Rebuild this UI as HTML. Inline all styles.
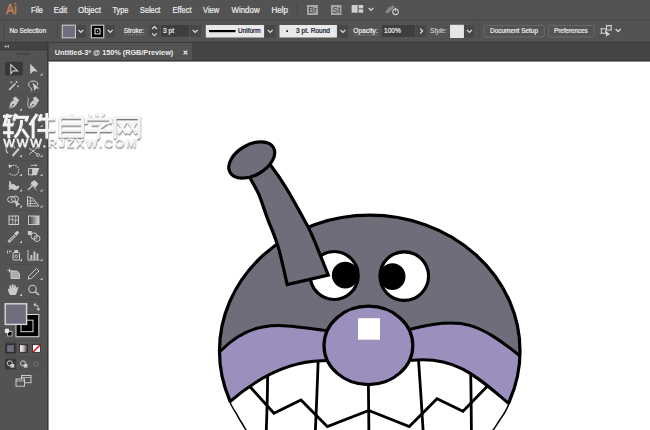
<!DOCTYPE html>
<html><head><meta charset="utf-8">
<style>
*{box-sizing:border-box}
html,body{margin:0;padding:0;width:650px;height:430px;overflow:hidden;background:#fff;font-family:"Liberation Sans",sans-serif}
.a{position:absolute}
svg text{font-family:"Liberation Sans",sans-serif;white-space:pre}
</style></head><body>
<div class="a" style="left:0;top:0;width:650px;height:19px;background:#535353"></div>
<div class="a" style="left:0;top:19px;width:650px;height:1px;background:#494949"></div>
<div class="a" style="left:0;top:20px;width:650px;height:1px;background:#4e4e4e"></div>
<div class="a" style="left:0;top:21px;width:650px;height:21px;background:#535353"></div>
<div class="a" style="left:0;top:41px;width:650px;height:1px;background:#4f4f4f"></div>
<div class="a" style="left:0;top:42px;width:650px;height:1px;background:#3c3c3c"></div>
<div class="a" style="left:47px;top:43px;width:603px;height:17px;background:#444"></div>
<div class="a" style="left:49px;top:43px;width:143px;height:17px;background:#535353"></div>
<div class="a" style="left:47px;top:60px;width:603px;height:1px;background:#393939"></div>
<div class="a" style="left:48px;top:61px;width:602px;height:1px;background:#8c8c8c"></div>
<div class="a" style="left:0;top:43px;width:47px;height:387px;background:#535353"></div>
<div class="a" style="left:0;top:43px;width:47px;height:6px;background:#434343"></div>
<div class="a" style="left:0;top:49px;width:47px;height:1px;background:#3e3e3e"></div>
<div class="a" style="left:0;top:50px;width:47px;height:1px;background:#4a4a4a"></div>
<div class="a" style="left:47px;top:43px;width:1px;height:387px;background:#393939"></div>
<div class="a" style="left:48px;top:61px;width:1px;height:369px;background:#8c8c8c"></div>
<div class="a" style="left:49px;top:62px;width:601px;height:368px;background:#fff"></div>

<svg class="a" style="left:0;top:0" width="650" height="430" viewBox="0 0 650 430">

  <defs>
    <clipPath id="face"><ellipse cx="369.75" cy="351" rx="150.3" ry="135.8"/><path d="M229.0,400.5 C229.6,401.7 231.3,405.2 232.6,407.5 C233.9,409.8 235.3,411.8 236.7,414.2 C238.1,416.6 239.6,419.4 241.2,422.0 C242.8,424.6 244.8,428.0 246.0,430.0 C247.2,432.0 247.9,433.3 248.3,434.0 L490.5,434 L510.5,400 Z"/></clipPath>
    <clipPath id="abovelo"><path d="M212,417 L229.5,402 C254.9,380.0 287.5,361.4 322,360.8 L368,359.5 L412.4,360.2 C455.8,356.1 476.7,376.6 507,402 L522,415 L530,100 L205,100 Z"/></clipPath>
  </defs>
  <ellipse cx="369.75" cy="351" rx="150.3" ry="135.8" fill="#6e6e7a"/>
  <g clip-path="url(#face)">
    <path d="M207,364.5 L220.5,351 C253.9,317.4 281.6,325.0 323.9,330.2 L368,331 L412.4,328.8 C462.5,315.8 479.3,324.0 518.5,354.7 L532,365.3 L530,440 L205,440 Z" fill="#9a8fbd"/>
    <path d="M212,417 L229.5,402 C254.9,380.0 287.5,361.4 322,360.8 L368,359.5 L412.4,360.2 C455.8,356.1 476.7,376.6 507,402 L522,415 L530,440 L205,440 Z" fill="#fff"/>
    <g fill="none" stroke="#000" stroke-width="3">
      <path d="M207,364.5 L220.5,351 C253.9,317.4 281.6,325.0 323.9,330.2 L368,331 L412.4,328.8 C462.5,315.8 479.3,324.0 518.5,354.7 L532,365.3"/>
      <path d="M212,417 L229.5,402 C254.9,380.0 287.5,361.4 322,360.8 L368,359.5 L412.4,360.2 C455.8,356.1 476.7,376.6 507,402 L522,415"/>
      <path d="M250.1,386.8 L273.9,413.3 L301,400 L327.3,426.5 L368.8,410.4 L409.3,426.5 L437,398.8 L463,411.2 L487.5,386" stroke-width="2.8"/>
      <path d="M267.6,376 Q267.5,400 266.2,432" stroke-width="2.8"/><path d="M318.1,362 Q317,395 315.3,432" stroke-width="2.8"/><path d="M368.4,384 L368.9,432" stroke-width="2.8"/><path d="M418.5,360 Q421,395 423.2,432" stroke-width="2.8"/><path d="M470.7,374 Q471.2,400 471.4,432" stroke-width="2.8"/>
    </g>
  </g>
  <path d="M229.0,400.5 C229.6,401.7 231.3,405.2 232.6,407.5 C233.9,409.8 235.3,411.8 236.7,414.2 C238.1,416.6 239.6,419.4 241.2,422.0 C242.8,424.6 244.8,428.0 246.0,430.0 C247.2,432.0 247.9,433.3 248.3,434.0 M510.5,400.0 C510.1,401.0 508.9,404.0 508.0,406.0 C507.1,408.0 506.5,409.5 505.1,411.9 C503.7,414.3 501.5,417.5 499.5,420.5 C497.5,423.5 494.7,427.8 493.2,430.0 C491.7,432.2 490.9,433.3 490.5,434.0" fill="none" stroke="#000" stroke-width="1.5"/>
  <ellipse cx="369.75" cy="351" rx="150.3" ry="135.8" fill="none" stroke="#000" stroke-width="3.2" clip-path="url(#abovelo)"/>
  <g stroke="#000" stroke-width="3.2">
    <circle cx="334.2" cy="275.5" r="24" fill="#fff"/>
    <ellipse cx="345.2" cy="275.1" rx="13.4" ry="13.3" fill="#000" stroke="none"/>
    <circle cx="404.25" cy="276.1" r="24.3" fill="#fff"/>
    <ellipse cx="392.4" cy="276.6" rx="13.1" ry="13.4" fill="#000" stroke="none"/>
    <ellipse cx="368.4" cy="345.4" rx="44.4" ry="39.2" fill="#9a8fbd"/>
    <rect x="358" y="318.2" width="22" height="21.5" fill="#fff" stroke="none"/>
    <path d="M246.0,170.0 C246.8,171.5 248.3,174.7 250.5,178.8 C252.7,183.0 256.2,188.3 259.0,194.9 C261.8,201.5 264.3,210.0 267.5,218.6 C270.7,227.2 274.7,235.4 278.0,246.4 C281.3,257.4 285.7,278.2 287.2,284.6 L328.2,275 C325.6,268.5 316.4,245.3 312.3,235.9 C308.2,226.5 307.9,226.6 303.5,218.6 C299.1,210.6 291.5,196.6 286.1,187.9 C280.8,179.2 275.4,171.6 271.4,166.3 C267.4,161.0 263.6,157.7 262.0,156.0 Z" fill="#6e6e7a"/>
    <ellipse cx="251.75" cy="160" rx="25" ry="15.3" transform="rotate(-30 251.75 160)" fill="#6e6e7a"/>
  </g>

<g><path d="M4,46.4 L6.3,45 L6.3,47.8 Z M6.6,46.4 L8.9,45 L8.9,47.8 Z" fill="#cbcbcb"/>
<rect x="17" y="52.7" width="13" height="2" fill="#464646"/>
<rect x="5" y="61.8" width="17.8" height="13.6" rx="1.5" fill="#383838"/>
<path d="M10.8,64.6 L10.8,73.6 L13.4,70.9 L17.6,70.9 Z" fill="none" stroke="#cbcbcb" stroke-width="1.1" stroke-linejoin="miter"/>
<path d="M30.2,63.8 L30.2,74.2 L33.2,71.3 L37.8,71.4 Z" fill="#cbcbcb"/>
<path d="M42.5,73.0 L42.5,75.5 L40.0,75.5 Z" fill="#cbcbcb"/>
<path d="M9,90 L15.5,83.5" stroke="#cbcbcb" stroke-width="1.6"/>
<path d="M16.5,81 l0,2 M15.5,82 l2,0 M11.5,81.5 l0,1.6 M10.7,82.3 l1.6,0 M18,85.5 l0,1.6 M17.2,86.3 l1.6,0" stroke="#cbcbcb" stroke-width="0.9"/>
<path d="M31.5,88.5 C27,86 28,81 33,81 C38,81 39,84.5 36.5,86" fill="none" stroke="#cbcbcb" stroke-width="1"/>
<path d="M32.5,82.5 L39.5,88.5 L36,88.6 L34.5,91 Z" fill="#cbcbcb"/>
<path d="M31.5,88.5 q1,2 -0.5,3" fill="none" stroke="#cbcbcb" stroke-width="0.9"/>
<rect x="4.5" y="94" width="38.5" height="1" fill="#4d4d4d"/>
<g transform="translate(8.5,98)"><path d="M0.5,11 L2,4.8 L5.5,1.8 L9,5.3 L6,8.8 Z" fill="#cbcbcb"/><path d="M4.2,0.5 L7,-1.6 L10.8,2.2 L8.6,5" fill="#cbcbcb"/><path d="M0.8,10.7 L4.2,7.2" stroke="#535353" stroke-width="0.8"/><circle cx="4.6" cy="6.6" r="0.9" fill="#535353"/></g>
<path d="M22,108.2 L22,110.7 L19.5,110.7 Z" fill="#cbcbcb"/>
<g transform="translate(28.5,98)"><path d="M0.5,11 L2,4.8 L5.5,1.8 L9,5.3 L6,8.8 Z" fill="#cbcbcb"/><path d="M4.2,0.5 L7,-1.6 L10.8,2.2 L8.6,5" fill="#cbcbcb"/><path d="M0.8,10.7 L4.2,7.2" stroke="#535353" stroke-width="0.8"/><circle cx="4.6" cy="6.6" r="0.9" fill="#535353"/></g>
<path d="M29,108 C26,104 30,99 27.5,97.5" fill="none" stroke="#cbcbcb" stroke-width="0.9"/>
<path d="M9,115.5 h9 M13.5,115.5 v10" stroke="#cbcbcb" stroke-width="1.5"/>
<path d="M22,124.5 L22,127 L19.5,127 Z" fill="#cbcbcb"/>
<path d="M29,125 L39,115" stroke="#cbcbcb" stroke-width="1.2"/>
<path d="M42.5,124.5 L42.5,127 L40.0,127 Z" fill="#cbcbcb"/>
<path d="M8,153 A4.5,4.5 0 1 1 15,148.5" fill="none" stroke="#cbcbcb" stroke-width="1.1"/>
<path d="M12.5,156 L19,148.5" stroke="#cbcbcb" stroke-width="2.2"/>
<path d="M22,154.5 L22,157 L19.5,157 Z" fill="#cbcbcb"/>
<path d="M29,148 L37,154 M29,154.5 L37,147.5" stroke="#cbcbcb" stroke-width="1"/><circle cx="38" cy="155" r="1.4" fill="none" stroke="#cbcbcb" stroke-width="0.9"/><circle cx="38" cy="147" r="1.4" fill="none" stroke="#cbcbcb" stroke-width="0.9"/>
<path d="M42.5,154.5 L42.5,157 L40.0,157 Z" fill="#cbcbcb"/>
<rect x="4.5" y="160" width="38.5" height="1" fill="#4d4d4d"/>
<path d="M10.5,166.5 A5,5 0 1 1 9.2,172.5" fill="none" stroke="#cbcbcb" stroke-width="1.1" stroke-dasharray="1.6 0.8"/><path d="M8.3,164.5 L12.2,165.2 L9.4,168.5 Z" fill="#cbcbcb"/>
<path d="M22,173.5 L22,176 L19.5,176 Z" fill="#cbcbcb"/>
<rect x="28.6" y="168.6" width="4.2" height="6.2" fill="none" stroke="#cbcbcb" stroke-width="1"/><path d="M32.3,168.1 L39.3,168.1 L36.6,175.3 L32.3,175.3 Z" fill="#cbcbcb"/><path d="M30.8,165.3 H36.3" stroke="#cbcbcb" stroke-width="0.9"/><path d="M35.3,163.9 L37.3,165.3 L35.3,166.7 Z" fill="#cbcbcb"/>
<path d="M42.5,173.5 L42.5,176 L40.0,176 Z" fill="#cbcbcb"/>
<path d="M9,181 c2,0 3,2 2,3.5 c2,-1 5,0 5,2 c1,-1 3,-1 3.5,0.5 c-1,1 -1.5,2.5 -3.5,3 c-2,0.5 -4,-0.5 -5,-1.5 c-0.5,1 -1.5,1.5 -2.5,1.5 c1,-1.5 1,-3 0,-4 c1,-1 1,-3 0.5,-5 Z" fill="#cbcbcb"/>
<path d="M22,189.0 L22,191.5 L19.5,191.5 Z" fill="#cbcbcb"/>
<path d="M28,190 L32.5,185.5" stroke="#cbcbcb" stroke-width="1.2"/><path d="M31,183 L34.5,180.5 L37.8,183.8 L35.3,187.3 Z M30.5,184 L36.5,190" fill="#cbcbcb" stroke="#cbcbcb" stroke-width="1"/>
<path d="M42.5,189.0 L42.5,191.5 L40.0,191.5 Z" fill="#cbcbcb"/>
<ellipse cx="11.5" cy="199.5" rx="4" ry="3" fill="none" stroke="#cbcbcb" stroke-width="1"/><ellipse cx="15" cy="199" rx="3.5" ry="3" fill="none" stroke="#cbcbcb" stroke-width="1"/><path d="M14.5,200 L20.5,204.5 L17.8,205 L16.5,207.2 Z" fill="#cbcbcb"/>
<path d="M22,205.0 L22,207.5 L19.5,207.5 Z" fill="#cbcbcb"/>
<path d="M27.5,196.5 L33,198.5 L39,206 L27.5,206 Z" fill="none" stroke="#cbcbcb" stroke-width="1"/><path d="M30.5,197.5 V206 M27.5,201 H34.5 M27.5,203.5 H37" stroke="#cbcbcb" stroke-width="0.8"/>
<path d="M42.5,205.0 L42.5,207.5 L40.0,207.5 Z" fill="#cbcbcb"/>
<rect x="4.5" y="210" width="38.5" height="1" fill="#4d4d4d"/>
<rect x="9" y="216" width="9.5" height="8.5" fill="none" stroke="#cbcbcb" stroke-width="1"/><path d="M9,220 C12,218 15,222 18.5,219.5 M12.5,216 C11.5,219 14,221 12.5,224.5 M15.5,216 C16.5,219 14.5,222 16,224.5" fill="none" stroke="#cbcbcb" stroke-width="0.8"/>
<defs><linearGradient id="gr" x1="0" x2="1" y1="0" y2="0"><stop offset="0" stop-color="#3a3a3a"/><stop offset="1" stop-color="#d8d8d8"/></linearGradient><linearGradient id="gr2" x1="0" x2="1"><stop offset="0" stop-color="#fafafa"/><stop offset="0.45" stop-color="#d0c8c8"/><stop offset="1" stop-color="#3a3030"/></linearGradient></defs>
<rect x="28.5" y="216" width="10.5" height="8.5" fill="url(#gr)" stroke="#cbcbcb" stroke-width="1"/>
<path d="M9,241.5 L15,235.5 M8.5,242 l1,-1" stroke="#cbcbcb" stroke-width="2.6"/><path d="M9.8,240.7 L14.6,235.9" stroke="#535353" stroke-width="1"/><path d="M14,233.5 L17.5,230.8 L19.2,232.5 L16.5,236 Z" fill="#cbcbcb"/>
<path d="M22,240.5 L22,243 L19.5,243 Z" fill="#cbcbcb"/>
<rect x="27.8" y="231" width="4" height="4" fill="#cbcbcb"/><circle cx="34" cy="236" r="3.2" fill="none" stroke="#cbcbcb" stroke-width="1"/><circle cx="37" cy="238.5" r="3" fill="none" stroke="#cbcbcb" stroke-width="1"/>
<rect x="4.5" y="246" width="38.5" height="1" fill="#4d4d4d"/>
<rect x="13" y="252.5" width="6.5" height="7.5" rx="1" fill="none" stroke="#cbcbcb" stroke-width="1"/><rect x="14.5" y="250" width="3.5" height="2" fill="#cbcbcb"/><circle cx="16.2" cy="256.3" r="1.4" fill="none" stroke="#cbcbcb" stroke-width="0.9"/><path d="M7.5,250.5 v3 M9.5,250.5 v2 M11,250.5 v1.5" stroke="#cbcbcb" stroke-width="0.9"/>
<path d="M22,258.5 L22,261 L19.5,261 Z" fill="#cbcbcb"/>
<path d="M28,250 V260 H39.5" fill="none" stroke="#cbcbcb" stroke-width="1"/><rect x="30.5" y="255" width="1.8" height="4.5" fill="#cbcbcb"/><rect x="33.5" y="251.5" width="1.8" height="8" fill="#cbcbcb"/><rect x="36.5" y="253.5" width="1.8" height="6" fill="#cbcbcb"/>
<path d="M42.5,258.5 L42.5,261 L40.0,261 Z" fill="#cbcbcb"/>
<rect x="4.5" y="264" width="38.5" height="1" fill="#4d4d4d"/>
<path d="M7.5,270.5 h4 M9.5,268.5 v4" stroke="#cbcbcb" stroke-width="0.9"/><path d="M11,271 h6 l2.5,2.5 v5 h-8.5 Z" fill="#cbcbcb" fill-opacity="0.75" stroke="#cbcbcb" stroke-width="1"/>
<path d="M28,279 L28.8,276 L36.5,268.5 L39,271 L31.3,278.5 Z" fill="none" stroke="#cbcbcb" stroke-width="1"/>
<path d="M42.5,277.5 L42.5,280 L40.0,280 Z" fill="#cbcbcb"/>
<path d="M10,295 C8.5,292 7.5,290 8,288.5 L9.5,289.5 L9.5,285.5 L11,285 L11.5,288.5 L12,284.3 L13.5,284.3 L13.8,288.5 L14.5,285 L16,285.5 L15.8,289 L17,286.8 L18.5,287.3 L17,292 C16.5,293.5 16,295 15,295 Z" fill="#cbcbcb"/>
<path d="M22,293.5 L22,296 L19.5,296 Z" fill="#cbcbcb"/>
<circle cx="32.5" cy="289" r="3.7" fill="none" stroke="#cbcbcb" stroke-width="1.1"/><path d="M35.2,291.7 L39,295" stroke="#cbcbcb" stroke-width="1.6"/>
<rect x="4.5" y="299" width="38.5" height="1" fill="#4d4d4d"/>
<rect x="16" y="314.5" width="22.8" height="22.2" fill="#000" stroke="#d8d8d8" stroke-width="1"/><rect x="21" y="320.2" width="12" height="11.5" fill="none" stroke="#d8d8d8" stroke-width="1"/>
<rect x="5.2" y="303.8" width="21.4" height="20.6" fill="#6e6e7e" stroke="#dadada" stroke-width="1.4"/>
<path d="M33.2,304.8 L35.8,302.8 V306.8 Z M38.4,311 L36.4,308.4 H40.4 Z" fill="#cbcbcb"/><path d="M35.5,304.8 Q38.4,304.8 38.4,308.6" fill="none" stroke="#cbcbcb" stroke-width="1"/>
<rect x="7.6" y="331.6" width="4.4" height="4.4" fill="#000" stroke="#cbcbcb" stroke-width="0.8"/><circle cx="7" cy="331" r="2.4" fill="#e8e8e8"/>
<rect x="4.5" y="340" width="38.5" height="1" fill="#4d4d4d"/>
<rect x="5" y="342.6" width="11.3" height="11.1" rx="1" fill="#3a3a3a"/>
<rect x="6.7" y="344.7" width="7.6" height="7.6" fill="#6e6e7e" stroke="#222" stroke-width="0.8"/>
<rect x="19.5" y="344.7" width="8" height="7.6" fill="url(#gr2)" stroke="#222" stroke-width="0.8"/>
<rect x="32.5" y="344.7" width="8" height="7.6" fill="#fff" stroke="#222" stroke-width="0.8"/><path d="M33,352 L40,345" stroke="#e8141a" stroke-width="1.6"/>
<rect x="4.5" y="356" width="38.5" height="1" fill="#4d4d4d"/>
<rect x="5" y="358.8" width="37.3" height="10.6" rx="1" fill="none" stroke="#4c4c4c" stroke-width="0.8"/>
<rect x="5" y="358.8" width="11.3" height="10.6" rx="1" fill="#3a3a3a"/>
<circle cx="9.8" cy="363.3" r="2.5" fill="none" stroke="#cbcbcb" stroke-width="1"/><rect x="10.5" y="364" width="3.8" height="3.6" fill="#cbcbcb"/>
<circle cx="23" cy="363.3" r="2.5" fill="none" stroke="#cbcbcb" stroke-width="1"/><rect x="23.8" y="364" width="3.6" height="3.6" fill="#cbcbcb"/>
<circle cx="36" cy="364" r="2.3" fill="none" stroke="#777" stroke-width="0.8"/>
<rect x="21.5" y="375.5" width="9.5" height="7.2" fill="none" stroke="#cbcbcb" stroke-width="1"/><path d="M21.5,377.5 h9.5" stroke="#cbcbcb" stroke-width="0.8"/><rect x="16" y="379" width="8.5" height="7.2" fill="#535353" stroke="#cbcbcb" stroke-width="1"/><path d="M16,381 h8.5" stroke="#cbcbcb" stroke-width="0.8"/></g>
<g><rect x="296.5" y="3" width="1" height="13.5" fill="#484848"/>
<rect x="307" y="5" width="11" height="10" rx="0" fill="#a6a6a6"/>
<text x="308.2" y="13.2" font-size="8.4" fill="#404040" textLength="8.6" lengthAdjust="spacingAndGlyphs">Br</text>
<rect x="331" y="5" width="10.5" height="10" rx="0" fill="#a6a6a6"/>
<text x="332.2" y="13.2" font-size="8.4" fill="#404040" textLength="8.2" lengthAdjust="spacingAndGlyphs">St</text>
<rect x="351.6" y="5" width="6" height="7.7" rx="0" fill="#cfcfcf"/><rect x="358.6" y="5" width="4.6" height="3.4" rx="0" fill="#cfcfcf"/><rect x="358.6" y="9.3" width="4.6" height="3.4" rx="0" fill="#cfcfcf"/>
<path d="M368.7,7.999999999999999 L371,10.399999999999999 L373.3,7.999999999999999" fill="none" stroke="#dcdcdc" stroke-width="1.1"/>
<path d="M385,12 L392.5,5.5 L395,6.5 L388,13.5 Z M388.5,7 L391,6 L386,11 Z" fill="#8a8a8a"/>
<circle cx="395.5" cy="11.8" r="2.8" fill="none" stroke="#cfcfcf" stroke-width="1.1"/><path d="M395.5,8 V11.5" stroke="#cfcfcf" stroke-width="1.1"/>
<rect x="3.5" y="22" width="1" height="17" fill="#474747"/>
<rect x="57" y="22" width="1" height="17" fill="#4a4a4a"/>
<rect x="62.3" y="25.2" width="13.2" height="12.6" rx="0" fill="#6e6e7e" stroke="#c8c8c8" stroke-width="1.1"/>
<rect x="76" y="25" width="9.5" height="12.5" rx="0" fill="#474747"/><path d="M78.3,29.9 L80.8,32.5 L83.3,29.9" fill="none" stroke="#e4e4e4" stroke-width="1.2"/>
<rect x="91.3" y="25.2" width="12.4" height="12.6" rx="0" fill="#000" stroke="#c8c8c8" stroke-width="1.1"/>
<rect x="95" y="28.7" width="5" height="5.2" rx="0" fill="none" stroke="#f0f0f0" stroke-width="1"/><rect x="97" y="30.8" width="1" height="1" fill="#fff"/>
<rect x="106" y="25" width="8.5" height="12.5" rx="0" fill="#474747"/><path d="M107.7,29.9 L110.2,32.5 L112.7,29.9" fill="none" stroke="#e4e4e4" stroke-width="1.2"/>
<path d="M124,34.8 H144.5" stroke="#9a9a9a" stroke-width="0.8" stroke-dasharray="1 1"/>
<rect x="149.5" y="25" width="10" height="11.7" rx="0" fill="#474747"/>
<path d="M152.1,29 L154.5,26.6 L156.9,29" fill="none" stroke="#e4e4e4" stroke-width="1.1"/><path d="M152.1,33.4 L154.5,35.8 L156.9,33.4" fill="none" stroke="#e4e4e4" stroke-width="1.1"/>
<rect x="161" y="25" width="28" height="11.7" rx="0" fill="#3e3e3e"/>
<rect x="190" y="25" width="11" height="11.7" rx="0" fill="#474747"/><path d="M192.7,29.9 L195.2,32.5 L197.7,29.9" fill="none" stroke="#e4e4e4" stroke-width="1.2"/>
<rect x="205.8" y="25" width="58.2" height="12.5" rx="0" fill="#e9e9e9"/>
<rect x="209" y="30" width="26.5" height="2.2" fill="#000"/>
<rect x="265.1" y="25" width="10.2" height="12.5" rx="0" fill="#474747"/><path d="M267.7,29.9 L270.2,32.5 L272.7,29.9" fill="none" stroke="#e4e4e4" stroke-width="1.2"/>
<rect x="279.5" y="25" width="57.4" height="12.5" rx="0" fill="#e9e9e9"/>
<rect x="286.3" y="30.3" width="1.6" height="1.6" fill="#000"/>
<rect x="338" y="25" width="9.7" height="12.5" rx="0" fill="#474747"/><path d="M340.4,29.9 L342.9,32.5 L345.4,29.9" fill="none" stroke="#e4e4e4" stroke-width="1.2"/>
<path d="M353.5,35 H378" stroke="#9a9a9a" stroke-width="0.8" stroke-dasharray="1 1"/>
<rect x="382" y="25" width="33.2" height="12" rx="0" fill="#3e3e3e"/>
<rect x="416" y="25" width="10.2" height="12" rx="0" fill="#474747"/><path d="M420.2,28.6 L422.6,31 L420.2,33.4" fill="none" stroke="#e4e4e4" stroke-width="1.2"/>
<rect x="450.6" y="25.2" width="12.8" height="12.4" rx="0" fill="#e6e6e6" stroke="#f2f2f2" stroke-width="0.8"/>
<rect x="464.3" y="25" width="10.2" height="12.5" rx="0" fill="#474747"/><path d="M466.9,29.9 L469.4,32.5 L471.9,29.9" fill="none" stroke="#e4e4e4" stroke-width="1.2"/>
<rect x="478.5" y="22" width="1" height="17" fill="#4a4a4a"/>
<rect x="483.9" y="25.4" width="60.4" height="11.6" rx="1.5" fill="none" stroke="#6c6c6c" stroke-width="0.9"/>
<rect x="548.7" y="25.4" width="45.4" height="11.6" rx="1.5" fill="none" stroke="#6c6c6c" stroke-width="0.9"/>
<path d="M601.3,28.8 h4.6 v4.4 h-4.6 Z M606.5,25.6 h4.6 v4.4 h-4.6 Z" fill="none" stroke="#cfcfcf" stroke-width="1.1"/>
<path d="M600.5,28 l1.5,1.5 M600.5,34 l1.5,-1.5 M605.8,24.8 l1.5,1.5 M611.8,24.8 l-1.5,1.5 M611.8,30.8 l-1.5,-1.5" stroke="#cfcfcf" stroke-width="0.8"/>
<path d="M605.2,30.5 L610.5,34.8 L607.8,35 L606.4,37 Z" fill="#d8d8d8"/>
<path d="M615.7,28.900000000000002 L618.2,31.7 L620.7,28.900000000000002" fill="none" stroke="#e4e4e4" stroke-width="1.2"/>
<path d="M183.6,50.6 L187.4,54.4 M187.4,50.6 L183.6,54.4" stroke="#e8e8e8" stroke-width="1.3"/></g>
<defs><filter id="wmsh" x="-10%" y="-10%" width="120%" height="130%"><feDropShadow dx="0.3" dy="1.4" stdDeviation="0.45" flood-color="#6a6a6a" flood-opacity="0.9"/></filter></defs><g filter="url(#wmsh)"><g fill="none" stroke="#f4f4f4" stroke-width="2.9" stroke-linecap="butt"><path d="M3,116.3 H11.5"/><path d="M7.6,113.8 L4.3,124.8 H13.2"/><path d="M8.8,119 V138"/><path d="M3,132.6 H13.8"/><path d="M16,113.8 L13.8,120.6"/><path d="M14.8,117.2 H27.3 L25.8,121.3"/><path d="M21.6,120 C21.6,128 19,133 14.6,137.5"/><path d="M22.3,129 L28.7,137.8"/><path d="M37,114 L29.8,125"/><path d="M33.1,119.5 V138.5"/><path d="M41.5,114.2 L38.8,121"/><path d="M39.5,119 H55"/><path d="M37.3,130.4 H55"/><path d="M46.8,113 V138.5"/><path d="M60,117.2 V137.5 M60,117.2 H82.5 V137.5 M60,124 H82.5 M60,130.4 H82.5 M60,136.4 H82.5"/><path d="M71,113 L69.5,117.5"/><path d="M89.5,113.5 L91,117 M96,112.8 L97,116.5 M103.5,112.8 L101.5,116.8"/><path d="M86,124 V119 H110.5 V123.5"/><path d="M91.5,124 H105 L98.5,128.5"/><path d="M85,130.5 H111.5"/><path d="M98.5,128 V137 Q98.5,138.5 96,138"/><path d="M115,138.5 V117.5 H139.2 V136 Q139.2,138 137,137.8"/><path d="M118,121.5 L126.5,133.5 M126,121.5 L118.5,133.5"/><path d="M128.5,121.5 L136.5,133.5 M136,121.5 L128.5,133.5"/></g><text x="3.5" y="147" font-size="10" letter-spacing="1.6" fill="#f4f4f4" stroke="#f4f4f4" stroke-width="0.45" textLength="134.5" lengthAdjust="spacingAndGlyphs" font-family="Liberation Sans">WWW.RJZXW.COM</text></g>
<g>
<text x="6.10" y="13.6" font-size="14.0" font-weight="normal" fill="#c47f52" stroke="#c47f52" stroke-width="0.55"  textLength="10.60" lengthAdjust="spacingAndGlyphs">Ai</text>
<text x="31.00" y="12.6" font-size="8.6" font-weight="normal" fill="#ececec" stroke="#ececec" stroke-width="0.22"  textLength="12.00" lengthAdjust="spacingAndGlyphs">File</text>
<text x="53.80" y="12.6" font-size="8.6" font-weight="normal" fill="#ececec" stroke="#ececec" stroke-width="0.22"  textLength="13.30" lengthAdjust="spacingAndGlyphs">Edit</text>
<text x="78.00" y="12.6" font-size="8.6" font-weight="normal" fill="#ececec" stroke="#ececec" stroke-width="0.22"  textLength="22.90" lengthAdjust="spacingAndGlyphs">Object</text>
<text x="112.40" y="12.6" font-size="8.6" font-weight="normal" fill="#ececec" stroke="#ececec" stroke-width="0.22"  textLength="16.10" lengthAdjust="spacingAndGlyphs">Type</text>
<text x="140.00" y="12.6" font-size="8.6" font-weight="normal" fill="#ececec" stroke="#ececec" stroke-width="0.22"  textLength="20.40" lengthAdjust="spacingAndGlyphs">Select</text>
<text x="172.60" y="12.6" font-size="8.6" font-weight="normal" fill="#ececec" stroke="#ececec" stroke-width="0.22"  textLength="18.90" lengthAdjust="spacingAndGlyphs">Effect</text>
<text x="203.00" y="12.6" font-size="8.6" font-weight="normal" fill="#ececec" stroke="#ececec" stroke-width="0.22"  textLength="16.20" lengthAdjust="spacingAndGlyphs">View</text>
<text x="231.50" y="12.6" font-size="8.6" font-weight="normal" fill="#ececec" stroke="#ececec" stroke-width="0.22"  textLength="28.10" lengthAdjust="spacingAndGlyphs">Window</text>
<text x="271.40" y="12.6" font-size="8.6" font-weight="normal" fill="#ececec" stroke="#ececec" stroke-width="0.22"  textLength="16.60" lengthAdjust="spacingAndGlyphs">Help</text>
<text x="9.40" y="32.8" font-size="7.0" font-weight="normal" fill="#ececec" stroke="#ececec" stroke-width="0.22"  textLength="36.60" lengthAdjust="spacingAndGlyphs">No Selection</text>
<text x="123.70" y="32.8" font-size="7.0" font-weight="normal" fill="#ececec" stroke="#ececec" stroke-width="0.22"  textLength="20.60" lengthAdjust="spacingAndGlyphs">Stroke:</text>
<text x="163.00" y="32.8" font-size="7.0" font-weight="normal" fill="#ececec" stroke="#ececec" stroke-width="0.22"  textLength="11.00" lengthAdjust="spacingAndGlyphs">3 pt</text>
<text x="238.00" y="32.8" font-size="7.0" font-weight="normal" fill="#0e1630" stroke="#0e1630" stroke-width="0.22"  textLength="22.60" lengthAdjust="spacingAndGlyphs">Uniform</text>
<text x="296.10" y="32.8" font-size="7.0" font-weight="normal" fill="#0e1630" stroke="#0e1630" stroke-width="0.22"  textLength="33.90" lengthAdjust="spacingAndGlyphs">3 pt. Round</text>
<text x="353.30" y="32.8" font-size="7.0" font-weight="normal" fill="#ececec" stroke="#ececec" stroke-width="0.22"  textLength="24.50" lengthAdjust="spacingAndGlyphs">Opacity:</text>
<text x="384.00" y="32.8" font-size="7.0" font-weight="normal" fill="#ececec" stroke="#ececec" stroke-width="0.22"  textLength="16.70" lengthAdjust="spacingAndGlyphs">100%</text>
<text x="430.00" y="32.8" font-size="7.0" font-weight="normal" fill="#c8c8c8" stroke="#c8c8c8" stroke-width="0.22" font-style="italic" textLength="16.50" lengthAdjust="spacingAndGlyphs">Style:</text>
<text x="490.00" y="32.8" font-size="7.0" font-weight="normal" fill="#eeeeee" stroke="#eeeeee" stroke-width="0.22"  textLength="48.00" lengthAdjust="spacingAndGlyphs">Document Setup</text>
<text x="554.00" y="32.8" font-size="7.0" font-weight="normal" fill="#eeeeee" stroke="#eeeeee" stroke-width="0.22"  textLength="33.70" lengthAdjust="spacingAndGlyphs">Preferences</text>
<text x="54.80" y="55.3" font-size="7.6" font-weight="bold" fill="#eeeeee" stroke="#eeeeee" stroke-width="0"  textLength="118.40" lengthAdjust="spacingAndGlyphs">Untitled-3* @ 150% (RGB/Preview)</text>
</g>
</svg>
</body></html>
